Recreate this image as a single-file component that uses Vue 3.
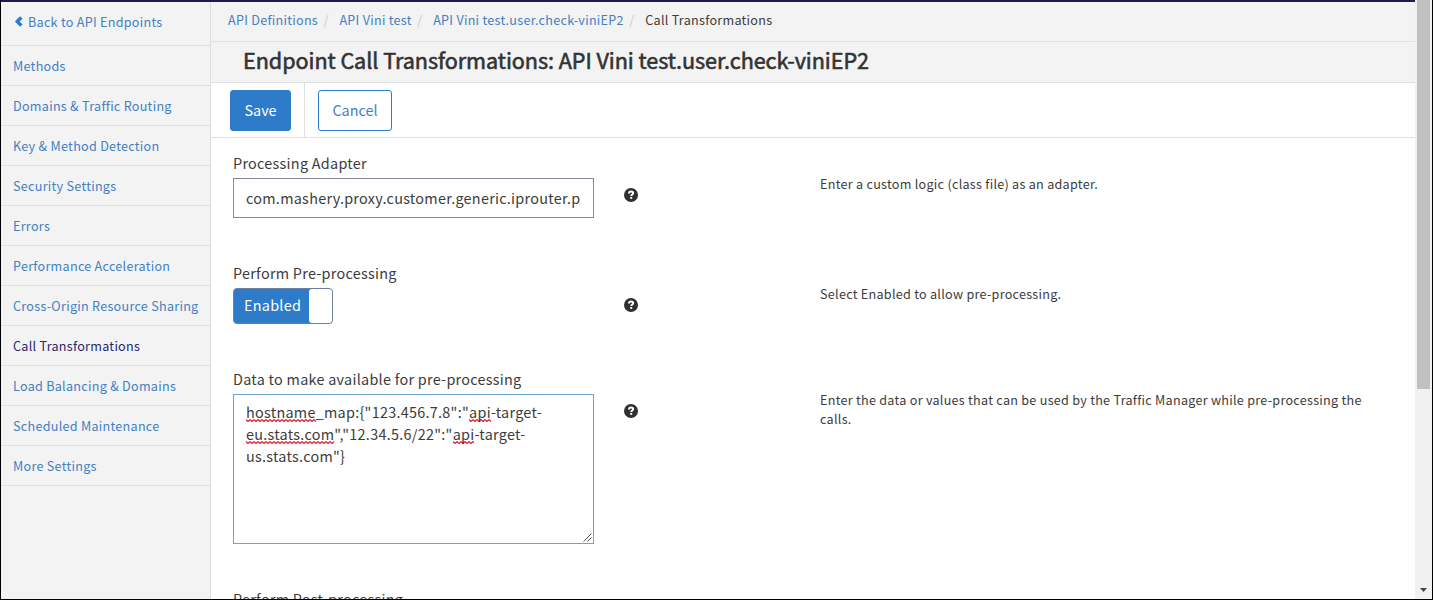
<script setup>
const links = [
  'Methods', 'Domains & Traffic Routing', 'Key & Method Detection', 'Security Settings',
  'Errors', 'Performance Acceleration', 'Cross-Origin Resource Sharing', 'Call Transformations',
  'Load Balancing & Domains', 'Scheduled Maintenance', 'More Settings'
]
const crumbs = ['API Definitions', 'API Vini test', 'API Vini test.user.check-viniEP2']
</script>

<template>
  <div class="window">
    <div class="app">
      <div class="topbar"></div>
      <div class="body">
        <nav class="sidebar">
          <a class="back">
            <svg width="9" height="11" viewBox="0 0 9 11"><path d="M6 .2 8.6 2.4 5.6 5.5 8.6 8.6 6 10.8.9 5.5Z" fill="#2d7bc9" /></svg>
            <span>Back to API Endpoints</span>
          </a>
          <a v-for="l in links" :key="l" class="link" :class="{ active: l === 'Call Transformations' }">{{ l }}</a>
        </nav>
        <main class="main">
          <div class="crumbs">
            <template v-for="c in crumbs" :key="c"><a>{{ c }}</a><i>/</i></template>
            <span>Call Transformations</span>
          </div>
          <h1 class="title">Endpoint Call Transformations: API Vini test.user.check-viniEP2</h1>
          <div class="toolbar">
            <div class="save-cell"><button class="btn primary">Save</button></div>
            <button class="btn outline">Cancel</button>
          </div>
          <div class="form">
            <section class="row first">
              <div class="field">
                <label>Processing Adapter</label>
                <div class="input">com.mashery.proxy.customer.generic.iprouter.p</div>
              </div>
              <svg class="help" viewBox="0 0 14 14"><circle cx="7" cy="7" r="7" /><path d="M4.9 5.5C5 3.9 6 3.5 7.1 3.5c1.2 0 2.1.6 2.1 1.7C9.2 6.6 7.2 6.5 7.2 8.1" /><path d="M6.2 9.9h2" /></svg>
              <p>Enter a custom logic (class file) as an adapter.</p>
            </section>
            <section class="row second">
              <div class="field">
                <label>Perform Pre-processing</label>
                <div class="toggle"><span>Enabled</span><b></b></div>
              </div>
              <svg class="help" viewBox="0 0 14 14"><circle cx="7" cy="7" r="7" /><path d="M4.9 5.5C5 3.9 6 3.5 7.1 3.5c1.2 0 2.1.6 2.1 1.7C9.2 6.6 7.2 6.5 7.2 8.1" /><path d="M6.2 9.9h2" /></svg>
              <p>Select Enabled to allow pre-processing.</p>
            </section>
            <section class="row third">
              <div class="field">
                <label>Data to make available for pre-processing</label>
                <div class="area">
                  <div><u>hostname</u>_map:{"123.456.7.8":"<u>api</u>-target-</div>
                  <div><u>eu.stats.com</u>","12.34.5.6/22":"<u>api</u>-target-</div>
                  <div>us.stats.com"}</div>
                  <svg class="grip" viewBox="0 0 9 9"><path d="M.5 8.5 8.5.5M4.5 8.5 8.5 4.5" stroke="#555" fill="none" /></svg>
                </div>
              </div>
              <svg class="help" viewBox="0 0 14 14"><circle cx="7" cy="7" r="7" /><path d="M4.9 5.5C5 3.9 6 3.5 7.1 3.5c1.2 0 2.1.6 2.1 1.7C9.2 6.6 7.2 6.5 7.2 8.1" /><path d="M6.2 9.9h2" /></svg>
              <p>Enter the data or values that can be used by the Traffic Manager while pre-processing the calls.</p>
            </section>
            <section class="row fourth">
              <label>Perform Post-processing</label>
            </section>
          </div>
        </main>
      </div>
    </div>
    <div class="scroll">
      <div class="thumb"></div>
      <svg width="7" height="4" viewBox="0 0 7 4"><path d="M0 0h7L3.5 4Z" fill="#444" /></svg>
    </div>
  </div>
</template>

<style scoped>
.window {
  box-sizing: border-box; width: 1433px; height: 600px; overflow: hidden; display: flex;
  border: solid #000; border-width: 0 1px 1px; background: #fff; color: #3c3c3c;
  font: 12.6px/19px "Noto Sans CJK SC", "Noto Sans", sans-serif; letter-spacing: .275px;
}
.app { flex: 1; display: flex; flex-direction: column; min-width: 0; }
.topbar { height: 2px; flex: none; background: #1b1b50; }
.body { flex: 1; display: flex; min-height: 0; }
.sidebar { width: 209px; flex: none; background: #f3f3f3; border-right: 1px solid #dedede; display: flex; flex-direction: column; }
a { color: #427fc4; }
.back, .link { box-sizing: border-box; flex: none; display: flex; align-items: center; border-bottom: 1px solid #e0e0e0; padding-left: 12px; white-space: nowrap; }
.back { height: 44px; padding-bottom: 4px; gap: 5px; padding-left: 13px; }
.link { height: 40px; }
.link.active { color: #27276f; }
.main { flex: 1; min-width: 0; display: flex; flex-direction: column; overflow: hidden; }
.crumbs { box-sizing: border-box; height: 40px; flex: none; background: #f3f3f3; border-bottom: 1px solid #e0e0e0; padding: 8px 0 0 17px; white-space: nowrap; display: flex; }
.crumbs i { font-style: normal; color: #ccc; margin: 0 10.7px 0 5.5px; }
.title { box-sizing: border-box; height: 41px; flex: none; margin: 0; background: #f3f3f3; border-bottom: 1px solid #e0e0e0; padding-left: 32px; font-size: 21.6px; line-height: 36px; font-weight: 400; letter-spacing: -.05px; -webkit-text-stroke: .6px #333; color: #333; white-space: nowrap; }
.toolbar { box-sizing: border-box; height: 55px; flex: none; border-bottom: 1px solid #e0e0e0; display: flex; align-items: center; }
.save-cell { height: 54px; display: flex; align-items: center; padding: 0 13px 0 19px; border-right: 1px solid #e0e0e0; margin-right: 13px; }
.btn { box-sizing: border-box; height: 41px; border: 1px solid #2d7bc9; border-radius: 3px; padding: 0 0 2px; font: inherit; font-size: 14.4px; letter-spacing: 0; }
.primary { width: 61px; background: #2d7bc9; color: #fff; }
.outline { width: 74px; background: #fff; color: #427fc4; }
.form { padding-left: 22px; }
.row { display: flex; align-items: flex-start; box-sizing: border-box; padding-top: 14px; }
.first { height: 110px; }
.second { height: 106px; }
.third { height: 220px; }
.fourth { height: 60px; }
.field { width: 361px; flex: none; }
label { display: block; font-size: 14.4px; line-height: 22px; height: 26px; white-space: nowrap; }
.input { box-sizing: border-box; height: 40px; border: 1px solid #84889a; font-size: 14.4px; line-height: 38px; padding-left: 12px; white-space: nowrap; }
.toggle { box-sizing: border-box; width: 100px; height: 36px; border: 1px solid #6f7f9e; border-radius: 4px; background: #2d7bc9; display: flex; justify-content: space-between; overflow: hidden; color: #fff; font-size: 14.4px; line-height: 32px; }
.toggle span { padding-left: 10px; }
.toggle b { width: 23px; background: #fff; border-radius: 3px 0 0 3px; }
.area { position: relative; box-sizing: border-box; height: 150px; border: 1px solid #6ea5cd; padding: 6px 12px; font-size: 14.4px; line-height: 22px; white-space: nowrap; }
.area u { text-decoration: none; background: url("data:image/svg+xml,%3Csvg xmlns='http://www.w3.org/2000/svg' width='4' height='3'%3E%3Cpath d='M0 .5 2 2.5 4 .5' fill='none' stroke='%23e0283c' stroke-width='1.3'/%3E%3C/svg%3E") repeat-x left bottom; }
.grip { position: absolute; right: 1px; bottom: 1px; width: 9px; height: 9px; }
.help { width: 14px; height: 14px; margin: 36px 0 0 30px; flex: none; }
.help circle { fill: #303030; }
.help path { fill: none; stroke: #fff; stroke-width: 1.9; }
.row p { margin: 22px 0 0 182px; width: 560px; }
.scroll { width: 17px; flex: none; background: #f1f1f1; display: flex; flex-direction: column; align-items: center; justify-content: space-between; box-sizing: border-box; padding-bottom: 7px; }
.thumb { width: 13px; height: 389px; background: #c1c1c1; }
</style>

<style>
body { margin: 0; overflow: hidden; }
</style>
